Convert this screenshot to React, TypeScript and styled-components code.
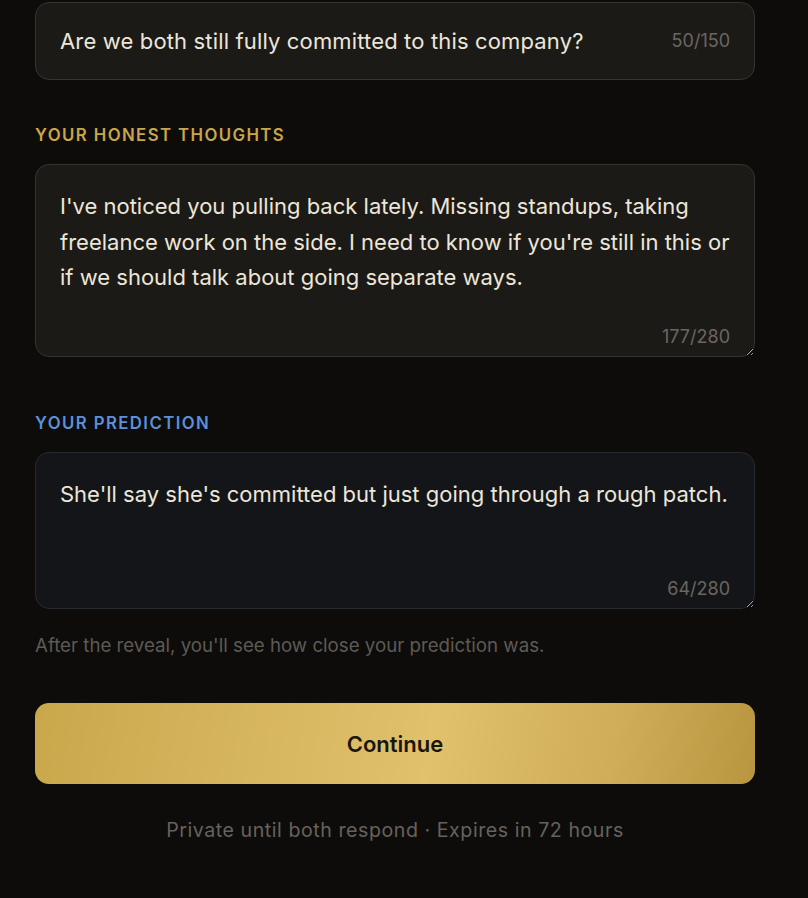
import React, { useState } from 'react'
import styled, { createGlobalStyle } from 'styled-components'

const GlobalStyle = createGlobalStyle`
  html, body {
    margin: 0;
    padding: 0;
    background: #0d0c0b;
  }
  body {
    font-family: Inter, "Noto Sans", "Liberation Sans", sans-serif;
    color: #ece6da;
  }
`

const Page = styled.div`
  padding: 2px 0 40px 35px;
  width: 720px;
`

const Field = styled.div`
  position: relative;
`

const QuestionInput = styled.input`
  box-sizing: border-box;
  display: block;
  width: 100%;
  height: 78px;
  padding: 0 90px 0 24px;
  background: #1c1a17;
  border: 1px solid #37342f;
  border-radius: 14px;
  color: #ece6da;
  font-family: inherit;
  font-size: 22px;
  letter-spacing: 0.15px;
  outline: none;
`

const Label = styled.div<{ $tone: 'gold' | 'blue' }>`
  margin: ${(p) => (p.$tone === 'gold' ? '45px 0 19px' : '56px 0 19px')};
  font-size: 16.8px;
  line-height: 20px;
  font-weight: 600;
  letter-spacing: 1.4px;
  text-transform: uppercase;
  color: ${(p) => (p.$tone === 'gold' ? '#c9a648' : '#5b90dc')};
`

const TextArea = styled.textarea<{ $tone: 'warm' | 'cool'; $height: number }>`
  box-sizing: border-box;
  display: block;
  width: 100%;
  height: ${(p) => p.$height}px;
  padding: 24px;
  background: ${(p) => (p.$tone === 'warm' ? '#1c1a17' : '#141518')};
  border: 1px solid ${(p) => (p.$tone === 'warm' ? '#37342f' : '#252930')};
  border-radius: 14px;
  color: #ece6da;
  font-family: inherit;
  font-size: 22px;
  line-height: 35.5px;
  resize: vertical;
  outline: none;
`

const Counter = styled.span<{ $inline?: boolean }>`
  position: absolute;
  right: 25px;
  font-size: 18px;
  line-height: 24px;
  color: #6b6660;
  pointer-events: none;
  ${(p) => (p.$inline ? 'top: 27px;' : 'bottom: 8px;')}
`

const Hint = styled.p`
  margin: 25px 0 0;
  font-size: 18.7px;
  line-height: 24px;
  color: #5e5a54;
`

const ContinueButton = styled.button`
  display: block;
  width: 100%;
  height: 81px;
  margin-top: 45px;
  border: none;
  border-radius: 14px;
  background: linear-gradient(100deg, #c9a84c 0%, #dcbc66 45%, #e0c16c 55%, #d0ad58 80%, #b8953f 100%);
  color: #1a160e;
  font-family: inherit;
  font-size: 22px;
  font-weight: 600;
  cursor: pointer;
`

const Footnote = styled.p`
  margin: 34px 0 0;
  text-align: center;
  font-size: 19.6px;
  line-height: 24px;
  letter-spacing: 0.55px;
  color: #66625c;
`

const App: React.FC = () => {
  const [question, setQuestion] = useState('Are we both still fully committed to this company?')
  const [thoughts, setThoughts] = useState(
    "I've noticed you pulling back lately. Missing standups, taking freelance work on the side. I need to know if you're still in this or if we should talk about going separate ways."
  )
  const [prediction, setPrediction] = useState(
    "She'll say she's committed but just going through a rough patch."
  )

  return (
    <>
      <GlobalStyle />
      <Page>
        <Field>
          <QuestionInput value={question} onChange={(e) => setQuestion(e.target.value)} />
          <Counter $inline>{question.length}/150</Counter>
        </Field>

        <Label $tone="gold">Your honest thoughts</Label>
        <Field>
          <TextArea
            $tone="warm"
            $height={193}
            value={thoughts}
            onChange={(e) => setThoughts(e.target.value)}
          />
          <Counter>{thoughts.length}/280</Counter>
        </Field>

        <Label $tone="blue">Your prediction</Label>
        <Field>
          <TextArea
            $tone="cool"
            $height={157}
            value={prediction}
            onChange={(e) => setPrediction(e.target.value)}
          />
          <Counter>{prediction.length}/280</Counter>
        </Field>

        <Hint>After the reveal, you'll see how close your prediction was.</Hint>

        <ContinueButton>Continue</ContinueButton>

        <Footnote>Private until both respond · Expires in 72 hours</Footnote>
      </Page>
    </>
  )
}

export default App
